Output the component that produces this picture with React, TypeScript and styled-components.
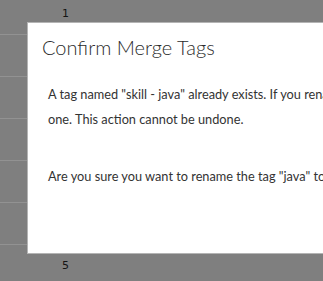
import React from 'react';
import styled, { createGlobalStyle } from 'styled-components';

const GlobalStyle = createGlobalStyle`
  html, body {
    margin: 0;
    padding: 0;
    background: #7f7f7f;
    overflow: hidden;
  }
  body {
    font-family: Lato, "Open Sans", sans-serif;
  }
`;

const Page = styled.div`
  position: relative;
  width: 323px;
  height: 281px;
  overflow: hidden;
`;

const Table = styled.div`
  display: flex;
  flex-direction: column;
  margin-top: -7px;
`;

const Row = styled.div<{ $last?: boolean }>`
  height: 41px;
  display: flex;
  align-items: center;
  padding-left: 62px;
  border-bottom: ${({ $last }) => ($last ? 'none' : '1px solid #929292')};
  font-family: "DejaVu Sans", sans-serif;
  font-size: 11px;
  color: #141414;
`;

const Modal = styled.div`
  position: absolute;
  left: 27px;
  top: 22px;
  width: 640px;
  height: 232px;
  background: #fff;
  border: 1px solid #b4b4b4;
  border-right: none;
  box-sizing: border-box;
  padding: 12px 0 0 14px;
  color: #333;
`;

const Title = styled.h2`
  margin: 0;
  font-size: 20px;
  font-weight: 300;
  line-height: 24px;
  color: #2b2b2b;
`;

const Body = styled.div`
  padding: 23px 0 0 6px;
`;

const Paragraph = styled.p`
  width: 556px;
  margin: 0 0 32px;
  font-size: 12.75px;
  line-height: 25px;
  color: #333;
`;

const rows = ['1', '2', '3', '4', '5', '6', '5'];

const App = () => (
  <Page>
    <GlobalStyle />
    <Table>
      {rows.map((label, i) => (
        <Row key={i} $last={i === rows.length - 1}>
          {label}
        </Row>
      ))}
    </Table>
    <Modal>
      <Title>Confirm Merge Tags</Title>
      <Body>
        <Paragraph>
          A tag named "skill - java" already exists. If you rename this tag, it will be merged into the existing
          one. This action cannot be undone.
        </Paragraph>
        <Paragraph>Are you sure you want to rename the tag "java" to "skill - java"?</Paragraph>
      </Body>
    </Modal>
  </Page>
);

export default App;
